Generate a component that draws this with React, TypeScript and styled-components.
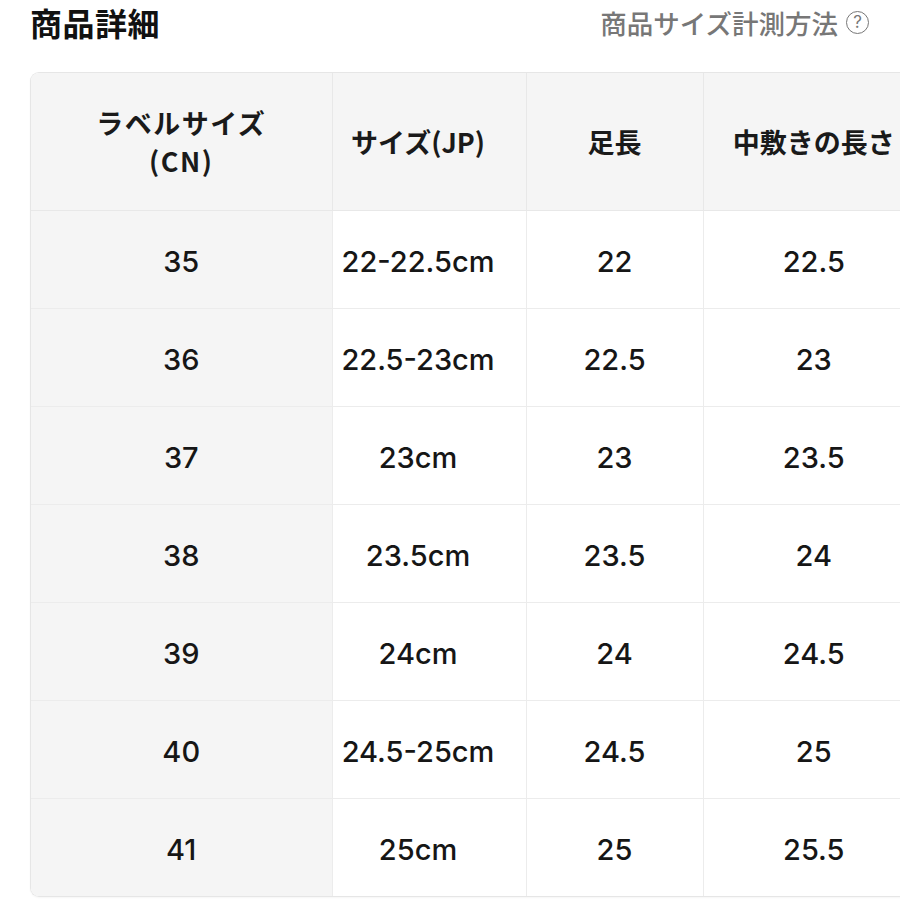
import styled, { createGlobalStyle } from 'styled-components';

const GlobalStyle = createGlobalStyle`
  html, body {
    margin: 0;
    padding: 0;
    background: #ffffff;
    overflow: hidden;
  }
  body {
    font-family: Inter, "Noto Sans CJK JP", sans-serif;
    color: #1c1c1c;
  }
`;

const Page = styled.main`
  width: 900px;
  height: 900px;
  padding: 0 0 0 30px;
  box-sizing: border-box;
  overflow: hidden;
`;

const TopBar = styled.header`
  display: flex;
  align-items: center;
  justify-content: space-between;
  height: 44px;
  padding-right: 31px;
`;

const Title = styled.h1`
  margin: 0;
  font-family: "Noto Sans CJK JP", sans-serif;
  font-size: 32px;
  font-weight: 700;
  letter-spacing: 0.5px;
  color: #111;
`;

const HowTo = styled.a`
  display: flex;
  align-items: center;
  gap: 8px;
  font-family: "Noto Sans CJK JP", sans-serif;
  font-size: 26.5px;
  font-weight: 500;
  color: #777777;
  text-decoration: none;
`;

const HelpIcon = styled.span`
  display: inline-flex;
  align-items: center;
  justify-content: center;
  width: 21px;
  height: 21px;
  border: 1.6px solid #777777;
  border-radius: 50%;
  font-family: Inter, sans-serif;
  font-size: 17px;
  font-weight: 400;
  line-height: 1;
`;

const TableWrap = styled.div`
  margin-top: 28px;
  width: 900px;
  border: 1px solid #e6e6e6;
  border-right: none;
  border-radius: 9px 0 0 9px;
  overflow: hidden;
  box-shadow: 0 1px 2px rgba(0, 0, 0, 0.04);
`;

const Table = styled.table`
  border-collapse: collapse;
  table-layout: fixed;
  width: 893px;
`;

const HeadCell = styled.th<{ $shift?: number; $spread?: number }>`
  height: 137px;
  padding: 0 ${(p) => p.$shift ?? 0}px 0 0;
  background: #f5f5f5;
  border-left: 1px solid #e8e8e8;
  border-bottom: 1px solid #e8e8e8;
  font-family: "Noto Sans CJK JP", sans-serif;
  font-size: 27px;
  font-weight: 700;
  line-height: 38px;
  letter-spacing: ${(p) => p.$spread ?? 0}px;
  color: #1a1a1a;
  text-align: center;
  vertical-align: middle;

  &:first-child {
    border-left: none;
  }
`;

const Cell = styled.td<{ $label?: boolean; $shift?: number }>`
  height: 93px;
  padding: 4px ${(p) => p.$shift ?? 0}px 0 0;
  background: ${(p) => (p.$label ? '#f5f5f5' : '#ffffff')};
  border-left: 1px solid #ececec;
  border-bottom: 1px solid #ececec;
  font-family: Inter, "Noto Sans CJK JP", sans-serif;
  font-size: 29px;
  font-weight: 550;
  color: #161616;
  text-align: center;
  vertical-align: middle;

  &:first-child {
    border-left: none;
  }
`;

const Row = styled.tr`
  &:last-child td {
    border-bottom: none;
  }
`;

const rows = [
  ['35', '22-22.5cm', '22', '22.5'],
  ['36', '22.5-23cm', '22.5', '23'],
  ['37', '23cm', '23', '23.5'],
  ['38', '23.5cm', '23.5', '24'],
  ['39', '24cm', '24', '24.5'],
  ['40', '24.5-25cm', '24.5', '25'],
  ['41', '25cm', '25', '25.5'],
];

const App: React.FC = () => {
  return (
    <Page>
      <GlobalStyle />
      <TopBar>
        <Title>商品詳細</Title>
        <HowTo href='#'>
          商品サイズ計測方法
          <HelpIcon>?</HelpIcon>
        </HowTo>
      </TopBar>

      <TableWrap>
        <Table>
          <colgroup>
            <col style={{ width: 301 }} />
            <col style={{ width: 194 }} />
            <col style={{ width: 177 }} />
            <col style={{ width: 221 }} />
          </colgroup>
          <thead>
            <tr>
              <HeadCell $spread={1.5}>
                ラベルサイズ
                <br />
                (CN)
              </HeadCell>
              <HeadCell $shift={22}>サイズ(JP)</HeadCell>
              <HeadCell>足長</HeadCell>
              <HeadCell>中敷きの長さ</HeadCell>
            </tr>
          </thead>
          <tbody>
            {rows.map((r) => (
              <Row key={r[0]}>
                <Cell $label>{r[0]}</Cell>
                <Cell $shift={22}>{r[1]}</Cell>
                <Cell>{r[2]}</Cell>
                <Cell>{r[3]}</Cell>
              </Row>
            ))}
          </tbody>
        </Table>
      </TableWrap>
    </Page>
  );
};

export default App;
